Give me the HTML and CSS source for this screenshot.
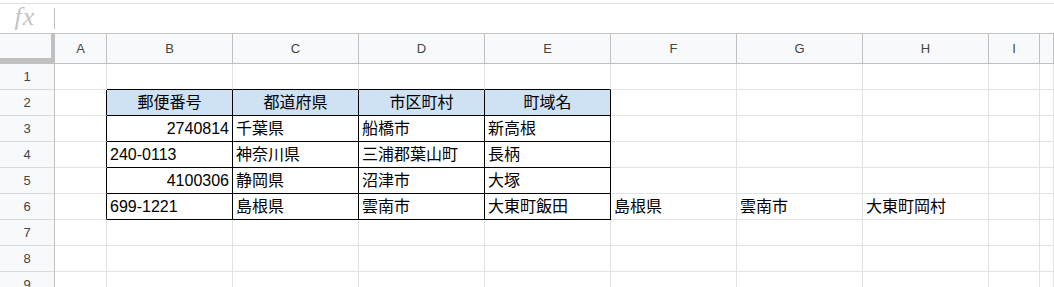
FILE: index.html
```html
<!DOCTYPE html>
<html lang="ja">
<head>
	<meta charset="UTF-8">
	<title>sheet</title>
	<link rel="stylesheet" href="styles.css">
</head>
<body>
	<div class="formula">
		<span class="fx">fx</span>
		<span class="bar"></span>
	</div>

	<div class="sheet">
		<!-- 列見出し -->
		<div class="corner"></div>
		<div class="col">A</div>
		<div class="col">B</div>
		<div class="col">C</div>
		<div class="col">D</div>
		<div class="col">E</div>
		<div class="col">F</div>
		<div class="col">G</div>
		<div class="col">H</div>
		<div class="col">I</div>
		<div class="col"></div>

		<!-- 1 -->
		<div class="row">1</div>
		<div class="cell"></div>
		<div class="cell top"></div>
		<div class="cell top"></div>
		<div class="cell top"></div>
		<div class="cell top"></div>
		<div class="cell"></div>
		<div class="cell"></div>
		<div class="cell"></div>
		<div class="cell"></div>
		<div class="cell"></div>

		<!-- 2 -->
		<div class="row">2</div>
		<div class="cell edge"></div>
		<div class="cell box head">郵便番号</div>
		<div class="cell box head">都道府県</div>
		<div class="cell box head">市区町村</div>
		<div class="cell box head">町域名</div>
		<div class="cell"></div>
		<div class="cell"></div>
		<div class="cell"></div>
		<div class="cell"></div>
		<div class="cell"></div>

		<!-- 3 -->
		<div class="row">3</div>
		<div class="cell edge"></div>
		<div class="cell box num">2740814</div>
		<div class="cell box">千葉県</div>
		<div class="cell box">船橋市</div>
		<div class="cell box">新高根</div>
		<div class="cell"></div>
		<div class="cell"></div>
		<div class="cell"></div>
		<div class="cell"></div>
		<div class="cell"></div>

		<!-- 4 -->
		<div class="row">4</div>
		<div class="cell edge"></div>
		<div class="cell box">240-0113</div>
		<div class="cell box">神奈川県</div>
		<div class="cell box">三浦郡葉山町</div>
		<div class="cell box">長柄</div>
		<div class="cell"></div>
		<div class="cell"></div>
		<div class="cell"></div>
		<div class="cell"></div>
		<div class="cell"></div>

		<!-- 5 -->
		<div class="row">5</div>
		<div class="cell edge"></div>
		<div class="cell box num">4100306</div>
		<div class="cell box">静岡県</div>
		<div class="cell box">沼津市</div>
		<div class="cell box">大塚</div>
		<div class="cell"></div>
		<div class="cell"></div>
		<div class="cell"></div>
		<div class="cell"></div>
		<div class="cell"></div>

		<!-- 6 -->
		<div class="row">6</div>
		<div class="cell edge"></div>
		<div class="cell box">699-1221</div>
		<div class="cell box">島根県</div>
		<div class="cell box">雲南市</div>
		<div class="cell box">大東町飯田</div>
		<div class="cell">島根県</div>
		<div class="cell">雲南市</div>
		<div class="cell">大東町岡村</div>
		<div class="cell"></div>
		<div class="cell"></div>

		<!-- 7 -->
		<div class="row">7</div>
		<div class="cell"></div>
		<div class="cell"></div>
		<div class="cell"></div>
		<div class="cell"></div>
		<div class="cell"></div>
		<div class="cell"></div>
		<div class="cell"></div>
		<div class="cell"></div>
		<div class="cell"></div>
		<div class="cell"></div>

		<!-- 8 -->
		<div class="row">8</div>
		<div class="cell"></div>
		<div class="cell"></div>
		<div class="cell"></div>
		<div class="cell"></div>
		<div class="cell"></div>
		<div class="cell"></div>
		<div class="cell"></div>
		<div class="cell"></div>
		<div class="cell"></div>
		<div class="cell"></div>

		<!-- 9 -->
		<div class="row">9</div>
		<div class="cell"></div>
		<div class="cell"></div>
		<div class="cell"></div>
		<div class="cell"></div>
		<div class="cell"></div>
		<div class="cell"></div>
		<div class="cell"></div>
		<div class="cell"></div>
		<div class="cell"></div>
		<div class="cell"></div>
	</div>
</body>
</html>
```

FILE: styles.css
```css
html,body{
	padding: 0;
	margin: 0;
	background: #fff;
	overflow: hidden;
}
body {
	font-family: "Liberation Sans", "Noto Sans CJK JP", sans-serif;
}
.formula {
	display: flex;
	align-items: center;
	height: 29px;
	margin-top: 3px;
	border-top: 1px solid #e1e1e1;
	border-bottom: 1px solid #c4c4c4;
}
.fx {
	width: 50px;
	margin-top: -4px;
	text-align: center;
	font: italic 26px/26px "Liberation Serif", serif;
	letter-spacing: 1px;
	color: #c4c4c4;
}
.bar {
	width: 1px;
	height: 21px;
	margin-left: 4px;
	margin-top: -1px;
	background: #c0c0c0;
}
.sheet {
	display: grid;
	grid-template-columns: 55px 52px repeat(7, 126px) 51px 1fr;
	grid-template-rows: 30px repeat(9, 26px);
}
.sheet div {
	box-sizing: border-box;
	white-space: nowrap;
}
.corner {
	background: #f8f9fa;
	border-right: 4px solid #c0c0c0;
	border-bottom: 6px solid #c0c0c0;
}
.col {
	display: flex;
	align-items: center;
	justify-content: center;
	background: #f8f9fa;
	border-right: 1px solid #c0c0c0;
	border-bottom: 1px solid #c0c0c0;
	font-size: 13px;
	color: #444;
}
.row {
	display: flex;
	align-items: center;
	justify-content: center;
	background: #f8f9fa;
	border-right: 1px solid #c0c0c0;
	border-bottom: 1px solid #dadada;
	font-size: 13px;
	color: #444;
}
.cell {
	display: flex;
	align-items: flex-end;
	padding: 0 3px 2px;
	border-right: 1px solid #e2e2e3;
	border-bottom: 1px solid #e2e2e3;
	font-size: 16px;
	line-height: 20px;
	color: #000;
}
.top {
	border-bottom-color: #000;
}
.edge {
	border-right-color: #000;
}
.box {
	border-right-color: #000;
	border-bottom-color: #000;
}
.head {
	justify-content: center;
	background: #cfe2f3;
}
.num {
	justify-content: flex-end;
}
```
